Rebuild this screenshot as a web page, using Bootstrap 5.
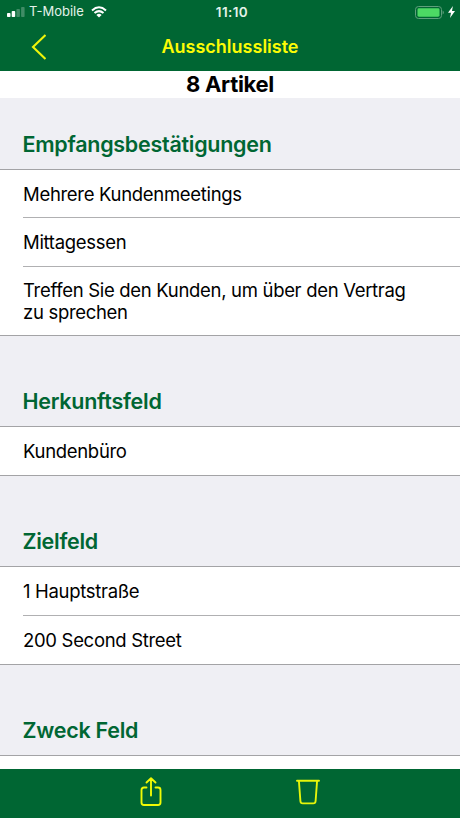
<!DOCTYPE html>
<html lang="de">
<head>
<meta charset="utf-8">
<meta name="viewport" content="width=device-width, initial-scale=1">
<title>Ausschlussliste</title>
<link href="https://cdn.jsdelivr.net/npm/bootstrap@5.3.0/dist/css/bootstrap.min.css" rel="stylesheet">
<style>
body { font-family: Inter, "Liberation Sans", sans-serif; color: #000; height: 818px; background: #efeff4; }
.bar-green { background: #006633; }
.status { height: 24px; color: #e4f2ea; font-size: 13px; padding: 0 5px 0 7px; }
.status .carrier { letter-spacing: 0; margin: 0 7px 0 4px; }
.status .clock { font-weight: 600; font-size: 13.5px; letter-spacing: .4px; padding-left: 2px; }
.status svg, .title-row svg, .toolbar svg { display: block; flex: none; }
.title-row { height: 47px; color: #fcfc05; padding-left: 31px; padding-right: 46px; padding-bottom: 2px; }
.title-row h1 { font-size: 18px; font-weight: 600; letter-spacing: 0; line-height: 22px; padding-top: 1px; }
.count { height: 27px; font-size: 22px; font-weight: 700; line-height: 27px; letter-spacing: -.3px; }
.group-title { height: 91px; font-size: 21.5px; font-weight: 600; line-height: 26px; letter-spacing: -.27px; color: #006633; padding: 0 22.5px 12px; border-bottom: 1px solid #a3a3a6; }
.group-title.first { height: 72px; }
.entries { padding-left: 23px; background: #fff; border-bottom: 1px solid #a3a3a6; }
.entry { height: 49px; font-size: 18.5px; line-height: 22px; letter-spacing: -.31px; border-bottom: 1px solid #b0b0b2; padding-right: 40px; }
.entry:last-child { border-bottom: 0; height: 48px; }
.entry.top { height: 48px; }
.entry.tall:last-child { height: 68px; }
.toolbar { height: 49px; padding-bottom: 3px; }
.share { margin-right: 20px; }
.trash { margin-left: 18px; }
</style>
</head>
<body class="d-flex flex-column overflow-hidden">
<header class="bar-green flex-shrink-0">
  <div class="status row g-0 align-items-center">
    <div class="col d-flex align-items-center">
      <svg width="18" height="10" viewBox="0 0 18 10"><rect y="6" width="3.5" height="4" rx=".8" fill="#fff"/><rect x="4.7" y="4" width="3.5" height="6" rx=".8" fill="#fff"/><rect x="9.4" y="2" width="3.5" height="8" rx=".8" fill="#408c66"/><rect x="14.1" width="3.5" height="10" rx=".8" fill="#408c66"/></svg>
      <span class="carrier">T-Mobile</span>
      <svg width="16" height="12" viewBox="0 0 16 12" fill="none" stroke="#fff" stroke-width="2"><path d="M1 4.4Q8-1.8 15 4.4M3.5 7.1Q8 3.2 12.5 7.1"/><path d="M5.4 8.9Q8 6.8 10.6 8.9L8 11.5Z" fill="#fff" stroke="none"/></svg>
    </div>
    <div class="col-auto clock">11:10</div>
    <div class="col d-flex align-items-center justify-content-end">
      <svg width="29" height="13" viewBox="0 0 29 13"><rect x=".5" y=".5" width="26" height="12" rx="3" fill="none" stroke="#5f9f7c"/><rect x="2.5" y="2.3" width="22" height="8.4" rx="1.4" fill="#4cd964"/><path d="M27.6 4.5q1.2.6 1.2 2t-1.2 2z" fill="#5f9f7c"/></svg>
      <svg class="ms-1" width="7" height="12" viewBox="0 0 7 12"><path d="M4.9 0 0 6.7h3L2 12l5-7H4z" fill="#fff"/></svg>
    </div>
  </div>
  <div class="title-row d-flex align-items-center">
    <svg width="15" height="26" viewBox="0 0 15 26"><path d="M14.500 1 2 13 14.500 25" fill="none" stroke="#eef50a" stroke-width="2.1"/></svg>
    <h1 class="flex-grow-1 text-center mb-0">Ausschlussliste</h1>
  </div>
</header>
<main class="flex-grow-1 overflow-hidden">
  <div class="count bg-white text-center">8 Artikel</div>
  <h2 class="group-title first d-flex align-items-end mb-0">Empfangsbestätigungen</h2>
  <div class="entries">
    <div class="entry top d-flex align-items-center">Mehrere Kundenmeetings</div>
    <div class="entry d-flex align-items-center">Mittagessen</div>
    <div class="entry tall d-flex align-items-center">Treffen Sie den Kunden, um über den Vertrag zu sprechen</div>
  </div>
  <h2 class="group-title d-flex align-items-end mb-0">Herkunftsfeld</h2>
  <div class="entries">
    <div class="entry d-flex align-items-center">Kundenbüro</div>
  </div>
  <h2 class="group-title d-flex align-items-end mb-0">Zielfeld</h2>
  <div class="entries">
    <div class="entry d-flex align-items-center">1 Hauptstraße</div>
    <div class="entry d-flex align-items-center">200 Second Street</div>
  </div>
  <h2 class="group-title d-flex align-items-end mb-0">Zweck Feld</h2>
  <div class="entries"><div class="entry"></div></div>
</main>
<footer class="toolbar bar-green row g-0 flex-shrink-0">
  <div class="col d-flex justify-content-end align-items-center pe-5">
    <svg class="share" width="22" height="30" viewBox="0 0 22 30" fill="none" stroke="#f0fa05" stroke-width="1.9" stroke-linecap="round" stroke-linejoin="round"><path d="M6.5 10.500H4q-2.500 0-2.500 2.500v12.500Q1.500 28 4 28h14q2.500 0 2.500-2.500V13q0-2.500-2.500-2.500h-2.500M11 18.500V1.700M6.500 5.500 11 1.300l4.500 4.200"/></svg>
  </div>
  <div class="col d-flex align-items-center ps-5">
    <svg class="trash" width="24" height="26" viewBox="0 0 24 26" fill="none" stroke="#e6f50a" stroke-width="1.900" stroke-linecap="round" stroke-linejoin="round"><path d="M1 1.800h22M2.900 1.800l1.500 20.200q.2 2.400 2.300 2.400h10.600q2.100 0 2.300-2.400L21.100 1.800"/></svg>
  </div>
</footer>
<script src="https://cdn.jsdelivr.net/npm/bootstrap@5.3.0/dist/js/bootstrap.bundle.min.js"></script>
</body>
</html>
